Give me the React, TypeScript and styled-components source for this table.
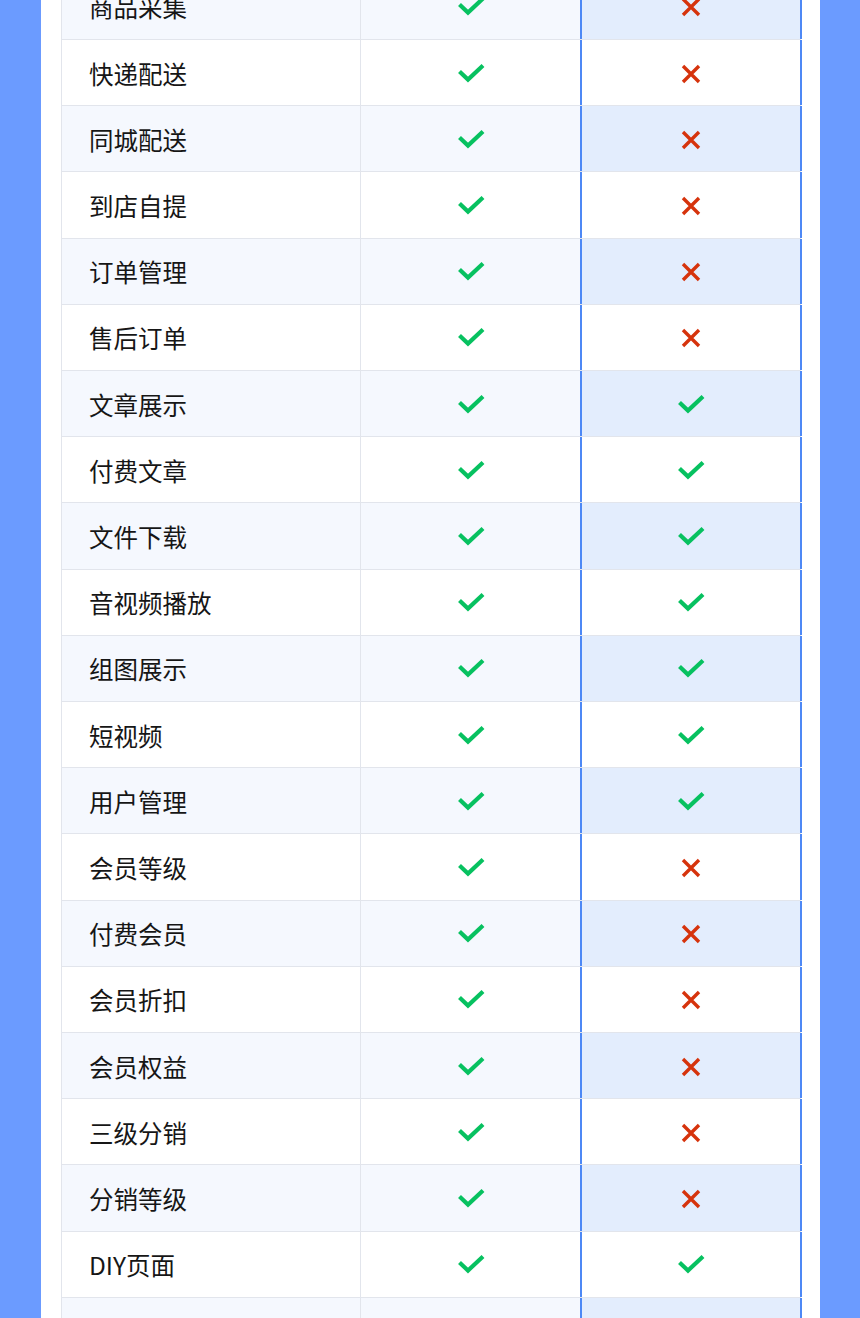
import React from 'react';
import styled, { createGlobalStyle } from 'styled-components';

type Feature = {
  name: string;
  basic: boolean;
  lite: boolean;
};

const features: Feature[] = [
  { name: '商品采集', basic: true, lite: false },
  { name: '快递配送', basic: true, lite: false },
  { name: '同城配送', basic: true, lite: false },
  { name: '到店自提', basic: true, lite: false },
  { name: '订单管理', basic: true, lite: false },
  { name: '售后订单', basic: true, lite: false },
  { name: '文章展示', basic: true, lite: true },
  { name: '付费文章', basic: true, lite: true },
  { name: '文件下载', basic: true, lite: true },
  { name: '音视频播放', basic: true, lite: true },
  { name: '组图展示', basic: true, lite: true },
  { name: '短视频', basic: true, lite: true },
  { name: '用户管理', basic: true, lite: true },
  { name: '会员等级', basic: true, lite: false },
  { name: '付费会员', basic: true, lite: false },
  { name: '会员折扣', basic: true, lite: false },
  { name: '会员权益', basic: true, lite: false },
  { name: '三级分销', basic: true, lite: false },
  { name: '分销等级', basic: true, lite: false },
  { name: 'DIY页面', basic: true, lite: true },
  { name: '', basic: false, lite: false },
];

const GlobalStyle = createGlobalStyle`
  html, body {
    margin: 0;
    padding: 0;
    background: #6b9bff;
    overflow: hidden;
  }
  body {
    font-family: "Noto Sans CJK SC", "Noto Sans", sans-serif;
  }
`;

const Check = () => (
  <svg width="30" height="22" viewBox="0 0 30 22">
    <path d="M3.5 8.5 L12 16.5 L27 2.5" fill="none" stroke="#07c160" strokeWidth="4.2" strokeLinecap="butt" strokeLinejoin="miter" />
  </svg>
);

const Cross = () => (
  <svg width="20" height="20" viewBox="0 0 20 20">
    <path d="M2 2 L18 18 M18 2 L2 18" fill="none" stroke="#d6330c" strokeWidth="3.4" />
  </svg>
);

const App: React.FC = () => {
  const mark = (ok: boolean, empty: boolean) => {
    if (empty) return null;
    return ok ? <Check /> : <Cross />;
  };

  return (
    <>
      <GlobalStyle />
      <Page>
        <Panel>
          <Table>
            {features.map((f, i) => (
              <Row key={i} $striped={i % 2 === 0}>
                <NameCell>{f.name}</NameCell>
                <MarkCell>{mark(f.basic, f.name === '')}</MarkCell>
                <HighlightCell $striped={i % 2 === 0}>{mark(f.lite, f.name === '')}</HighlightCell>
              </Row>
            ))}
          </Table>
        </Panel>
      </Page>
    </>
  );
};

const Page = styled.div`
  height: 1318px;
  padding: 0 40px 0 41px;
  box-sizing: border-box;
  overflow: hidden;
`;

const Panel = styled.div`
  background: #ffffff;
  height: 100%;
  padding: 0 19px 0 20px;
  overflow: hidden;
`;

const Table = styled.div`
  margin-top: -26.21px;
  border-left: 1px solid #e2e5ec;
`;

const Row = styled.div<{ $striped: boolean }>`
  display: grid;
  grid-template-columns: 299px 220px 221px;
  height: 66.21px;
  box-sizing: border-box;
  border-bottom: 1px solid #e2e5ec;
  background: ${({ $striped }) => ($striped ? '#f5f8fe' : '#ffffff')};
`;

const NameCell = styled.div`
  display: flex;
  align-items: center;
  padding-left: 27px;
  padding-top: 1px;
  font-size: 24.5px;
  color: #161616;
  border-right: 1px solid #e2e5ec;
`;

const MarkCell = styled.div`
  display: flex;
  align-items: center;
  justify-content: center;
  padding-top: 2px;
`;

const HighlightCell = styled.div<{ $striped: boolean }>`
  display: flex;
  align-items: center;
  justify-content: center;
  padding-top: 2px;
  border-left: 2px solid #4d88f5;
  border-right: 2px solid #4d88f5;
  margin-left: -1px;
  background: ${({ $striped }) => ($striped ? '#e3edfd' : '#ffffff')};
`;

export default App;
